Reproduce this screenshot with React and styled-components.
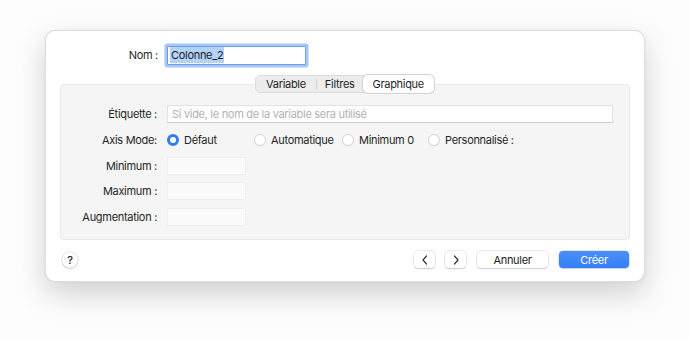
import React from "react";
import styled, { createGlobalStyle } from "styled-components";

const Global = createGlobalStyle`
  html, body { margin: 0; padding: 0; background: #ffffff; }
  body { font-family: Inter, "Noto Sans", "Liberation Sans", sans-serif; font-size: 11px; letter-spacing: -0.3px; color: #262626; -webkit-font-smoothing: antialiased; }
`;

const Page = styled.div`
  width: 690px;
  height: 340px;
  padding: 30px 0 0 45px;
  box-sizing: border-box;
  background: #fdfdfd;
`;

const Window = styled.div`
  width: 600px;
  height: 252px;
  box-sizing: border-box;
  background: #ffffff;
  border-radius: 10px;
  border: 1px solid rgba(0, 0, 0, 0.13);
  box-shadow: 0 12px 30px rgba(0, 0, 0, 0.18), 0 0 2px rgba(0, 0, 0, 0.08);
  padding: 14px 14px 0 14px;
  display: flex;
  flex-direction: column;
`;

const FormRow = styled.div`
  display: grid;
  grid-template-columns: ${(p) => p.$label || 97}px auto;
  column-gap: ${(p) => p.$gap || 9}px;
  align-items: center;
  height: ${(p) => p.$h || 26}px;
  margin-top: ${(p) => p.$mt || 0}px;
  margin-left: ${(p) => p.$ml || 0}px;
`;

const Label = styled.div`
  text-align: right;
  white-space: nowrap;
  color: #262626;
`;

const NameField = styled.div`
  width: 139px;
  height: 19px;
  box-sizing: border-box;
  border: 1px solid #6e9ee8;
  box-shadow: 0 0 0 2.5px #a7c6f5;
  border-radius: 1px;
  background: #fff;
  display: flex;
  align-items: center;
  padding-left: 2px;
`;

const Selected = styled.span`
  background: #b4d3fc;
  padding: 1px 1px;
  color: #1a1a1a;
`;

const TabView = styled.div`
  margin-top: 10px;
  display: flex;
  flex-direction: column;
  align-items: center;
`;

const Segmented = styled.div`
  position: relative;
  z-index: 1;
  display: flex;
  align-items: center;
  height: 18px;
  box-sizing: border-box;
  border: 1px solid #dcdcdc;
  border-radius: 5px;
  background: #ececec;
  margin-bottom: -9px;
`;

const Tab = styled.div`
  height: 18px;
  margin: -1px 0;
  box-sizing: border-box;
  padding: 0 ${(p) => p.$pad || 10}px;
  display: flex;
  align-items: center;
  color: #1f1f1f;
  border-radius: 5px;
  background: ${(p) => (p.$active ? "#ffffff" : "transparent")};
  box-shadow: ${(p) => (p.$active ? "0 0 0 1px #d3d3d3, 0 1px 1px rgba(0,0,0,0.06)" : "none")};
`;

const Divider = styled.div`
  width: 1px;
  height: 10px;
  background: #cfcfcf;
`;

const Group = styled.div`
  align-self: stretch;
  height: 156px;
  box-sizing: border-box;
  background: #f5f5f5;
  border: 1px solid #e8e8e8;
  border-radius: 4px;
  padding: 20px 16px 0 0;
  display: flex;
  flex-direction: column;
`;

const TextField = styled.div`
  height: 18px;
  box-sizing: border-box;
  background: #ffffff;
  border: 1px solid #e2e2e2;
  border-bottom-color: #d0d0d0;
  display: flex;
  align-items: center;
  padding-left: 4px;
  color: #b2b2b2;
`;

const SmallField = styled.div`
  width: 79px;
  height: 18px;
  box-sizing: border-box;
  background: #fbfbfb;
  border: 1px solid #eeeeee;
`;

const Radios = styled.div`
  display: grid;
  grid-template-columns: 87px 88px 86px auto;
  align-items: center;
`;

const RadioItem = styled.div`
  display: flex;
  align-items: center;
  gap: 5px;
  white-space: nowrap;
`;

const RadioDot = styled.span`
  width: 12px;
  height: 12px;
  box-sizing: border-box;
  border-radius: 50%;
  flex: none;
  ${(p) =>
    p.$on
      ? `background: #ffffff; border: 3.5px solid #2f7cf6;`
      : `background: #ffffff; border: 1px solid #d6d6d6; box-shadow: 0 0.5px 1px rgba(0,0,0,0.08);`}
`;

const Footer = styled.div`
  flex: 1;
  display: flex;
  align-items: center;
  padding: 0 1px 2px 2px;
`;

const HelpButton = styled.div`
  width: 16px;
  height: 16px;
  border-radius: 50%;
  background: #fff;
  box-shadow: 0 0 0 0.5px rgba(0, 0, 0, 0.18), 0 1px 1.5px rgba(0, 0, 0, 0.15);
  display: flex;
  align-items: center;
  justify-content: center;
  font-size: 11px;
  font-weight: 500;
  color: #222;
`;

const Spacer = styled.div`
  flex: 1;
`;

const Button = styled.div`
  height: 17px;
  width: ${(p) => p.$w}px;
  margin-left: ${(p) => p.$ml || 0}px;
  box-sizing: border-box;
  border-radius: 4px;
  display: flex;
  align-items: center;
  justify-content: center;
  color: ${(p) => (p.$primary ? "#ffffff" : "#222222")};
  background: ${(p) => (p.$primary ? "linear-gradient(#4a8ff8, #3580f6)" : "#ffffff")};
  box-shadow: ${(p) =>
    p.$primary
      ? "0 0 0 0.5px rgba(0,60,200,0.25), 0 1px 1px rgba(0,0,0,0.1)"
      : "0 0 0 0.5px rgba(0,0,0,0.16), 0 1px 1.5px rgba(0,0,0,0.14)"};
`;

const Chevron = ({ dir }) => (
  <svg width="8" height="10" viewBox="0 0 8 10">
    <path
      d={dir === "left" ? "M5.5 1 L2 5 L5.5 9" : "M2.5 1 L6 5 L2.5 9"}
      fill="none"
      stroke="#333"
      strokeWidth="1.2"
      strokeLinecap="round"
      strokeLinejoin="round"
    />
  </svg>
);

export default function App() {
  return (
    <>
      <Global />
      <Page>
        <Window>
          <FormRow $label={97} $gap={9} $h={20} $ml={1}>
            <Label>Nom :</Label>
            <NameField>
              <Selected>Colonne_2</Selected>
            </NameField>
          </FormRow>
          <TabView>
            <Segmented>
              <Tab $pad={10}>Variable</Tab>
              <Divider />
              <Tab $pad={8}>Filtres</Tab>
              <Tab $active $pad={10}>Graphique</Tab>
            </Segmented>
            <Group>
              <FormRow $label={96} $gap={10} $h={18}>
                <Label>Étiquette :</Label>
                <TextField>Si vide, le nom de la variable sera utilisé</TextField>
              </FormRow>
              <FormRow $label={96} $gap={10} $h={17} $mt={8}>
                <Label>Axis Mode:</Label>
                <Radios>
                  <RadioItem>
                    <RadioDot $on />
                    Défaut
                  </RadioItem>
                  <RadioItem>
                    <RadioDot />
                    Automatique
                  </RadioItem>
                  <RadioItem>
                    <RadioDot />
                    Minimum 0
                  </RadioItem>
                  <RadioItem>
                    <RadioDot />
                    Personnalisé :
                  </RadioItem>
                </Radios>
              </FormRow>
              <FormRow $label={96} $gap={10} $h={18} $mt={9}>
                <Label>Minimum :</Label>
                <SmallField />
              </FormRow>
              <FormRow $label={96} $gap={10} $h={18} $mt={7}>
                <Label>Maximum :</Label>
                <SmallField />
              </FormRow>
              <FormRow $label={96} $gap={10} $h={18} $mt={8}>
                <Label>Augmentation :</Label>
                <SmallField />
              </FormRow>
            </Group>
          </TabView>
          <Footer>
            <HelpButton>?</HelpButton>
            <Spacer />
            <Button $w={21}>
              <Chevron dir="left" />
            </Button>
            <Button $w={21} $ml={10}>
              <Chevron dir="right" />
            </Button>
            <Button $w={71} $ml={11}>Annuler</Button>
            <Button $w={70} $ml={11} $primary>Créer</Button>
          </Footer>
        </Window>
      </Page>
    </>
  );
}
